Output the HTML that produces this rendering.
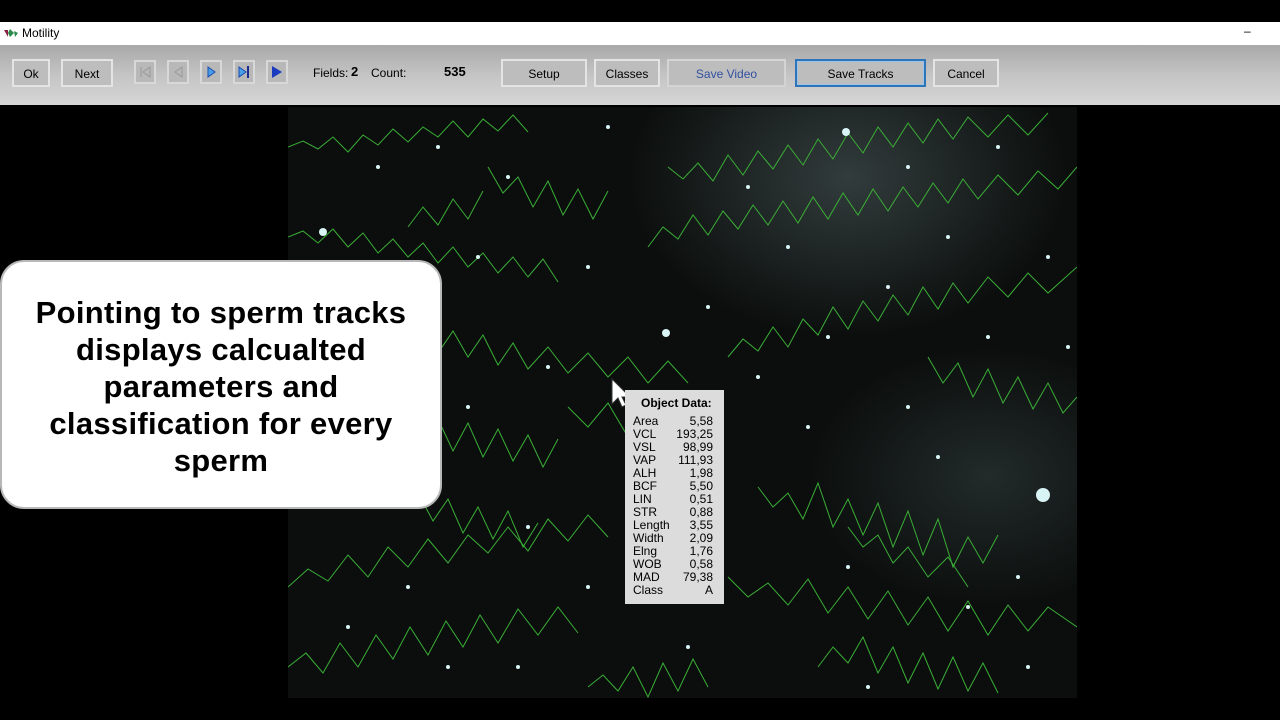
<!DOCTYPE html>
<html><head><meta charset="utf-8"><style>
*{margin:0;padding:0;box-sizing:border-box}
body{width:1280px;height:720px;background:#000;position:relative;overflow:hidden;font-family:"Liberation Sans",sans-serif}
.title{position:absolute;left:0;top:22px;width:1280px;height:23px;background:#fff;font-size:12px;color:#000}
.title span{position:absolute;left:22px;top:4px}
.tb{position:absolute;left:0;top:45px;width:1280px;height:60px;background:linear-gradient(#a9a9a9,#c4c4c4 50%,#d6d6d6)}
.b{position:absolute;top:59px;height:28px;border:2px solid #e4e4e4;background:#bdbdbd;font-size:12px;color:#000;text-align:center;line-height:26px}
.ic{position:absolute;top:60px;width:22px;height:24px;border:2px solid #d8d8d8;background:#b8b8b8}
.lbl{position:absolute;font-size:12px;color:#000}
.img{position:absolute;left:288px;top:107px;width:789px;height:591px;background:radial-gradient(ellipse 220px 160px at 560px 70px,#323c3c,transparent),radial-gradient(ellipse 180px 130px at 700px 370px,#222a2a,transparent),#0b0e0d}
.call{position:absolute;left:0;top:260px;width:442px;height:249px;background:#fff;border:2px solid #b8b8b8;border-radius:24px;font-weight:bold;font-size:31px;line-height:37px;text-align:center;padding-top:32px;letter-spacing:0.3px}
.od{position:absolute;left:625px;top:390px;width:99px;height:214px;background:#dcdcdc;font-size:12px;color:#000}
.od .h{font-weight:bold;position:absolute;left:16px;top:6px}
.od table{position:absolute;left:8px;top:25px;width:80px;border-collapse:collapse}
.od td{height:13px;line-height:13px;padding:0}
.od td+td{text-align:right}
</style></head><body>
<div class="title"><svg style="position:absolute;left:3px;top:5px" width="16" height="12"><path d="M1 3l4 0 0 7z" fill="#8b2040"/><path d="M7 2l4 4-4 4-2-4z" fill="#2a8a4a"/><path d="M11 4l4 2-3 4z" fill="#2a8a4a"/></svg><span>Motility</span><span style="left:1244px;top:2px">–</span></div>
<div class="tb"></div>
<div class="b" style="left:12px;width:38px">Ok</div>
<div class="b" style="left:61px;width:52px">Next</div>
<div class="ic" style="left:134px"><svg width="18" height="20"><path d="M5 5v10M14 5l-7 5 7 5z" stroke="#999" fill="none"/></svg></div>
<div class="ic" style="left:167px"><svg width="18" height="20"><path d="M13 5l-7 5 7 5z" stroke="#999" fill="none"/></svg></div>
<div class="ic" style="left:200px"><svg width="18" height="20"><path d="M6 5l7 5-7 5z" stroke="#1a4ab0" fill="#4aa0e8"/></svg></div>
<div class="ic" style="left:233px"><svg width="18" height="20"><path d="M4 5l7 5-7 5z" stroke="#1a4ab0" fill="#4aa0e8"/><path d="M13 4v12" stroke="#1a2a90" stroke-width="2"/></svg></div>
<div class="ic" style="left:266px"><svg width="18" height="20"><path d="M4 4l10 6-10 6z" fill="#1a3ac0"/></svg></div>
<div class="lbl" style="left:313px;top:66px">Fields:</div>
<div class="lbl" style="left:351px;top:64px;font-weight:bold;font-size:13px">2</div>
<div class="lbl" style="left:371px;top:66px">Count:</div>
<div class="lbl" style="left:444px;top:64px;font-weight:bold;font-size:13px">535</div>
<div class="b" style="left:501px;width:86px">Setup</div>
<div class="b" style="left:594px;width:66px">Classes</div>
<div class="b" style="left:667px;width:119px;color:#3050a0;border-color:#d4d4d4">Save Video</div>
<div class="b" style="left:795px;width:131px;border:2px solid #2d74b8;box-shadow:inset 0 0 0 1px #9cc4e8">Save Tracks</div>
<div class="b" style="left:933px;width:66px">Cancel</div>
<div class="img"><svg width="789" height="591" fill="none" stroke="#3aae36" stroke-width="1">
<polyline points="0,40 15,34 30,42 45,30 60,45 75,28 90,38 105,22 120,35 135,20 150,30 165,14 180,30 195,12 210,24 225,8 240,25"/>
<polyline points="0,130 15,124 30,136 45,122 60,140 75,126 90,146 105,132 120,150 135,136 150,156 165,140 180,160 195,146 210,166 225,150 240,170 255,152 270,175"/>
<polyline points="60,230 75,218 90,234 105,212 120,240 135,218 150,246 165,224 180,250 195,228 210,258 225,236 240,262 260,240 280,266 300,246 320,270 340,250 360,276 380,254 400,276"/>
<polyline points="360,140 375,120 390,132 405,108 420,128 435,104 450,122 465,98 480,118 495,94 510,116 525,90 540,112 555,86 570,108 585,82 600,104 615,80 630,100 645,76 660,96 675,72 690,92 710,68 730,88 750,64 770,82 789,60"/>
<polyline points="380,60 395,72 410,56 425,74 440,48 455,68 470,44 485,62 500,38 515,58 530,32 545,52 560,26 575,46 590,20 605,40 620,16 635,36 650,12 665,32 680,10 700,30 720,8 740,28 760,6"/>
<polyline points="440,250 455,232 470,244 485,220 500,240 515,212 530,228 545,200 560,222 575,194 590,214 605,188 620,208 635,180 650,202 665,176 680,196 700,170 720,190 740,166 760,186 789,160"/>
<polyline points="0,300 15,314 30,298 45,322 60,296 75,326 90,302 105,332 120,306 135,338 150,312 165,344 180,316 195,350 210,322 225,354 240,328 255,360 270,332"/>
<polyline points="0,480 20,462 40,474 60,448 80,470 100,440 120,460 140,432 160,456 180,428 200,446 220,420 240,444 260,412 280,434 300,408 320,430"/>
<polyline points="0,560 18,546 35,566 52,536 70,560 88,528 105,552 122,520 140,548 158,514 175,540 192,508 210,536 230,502 250,528 270,500 290,526"/>
<polyline points="440,470 460,490 480,476 500,498 520,472 540,506 560,480 580,512 600,484 620,518 640,490 660,524 680,494 700,528 720,498 740,524 760,500 789,520"/>
<polyline points="470,380 485,400 500,386 515,412 530,376 545,420 560,392 575,428 590,396 605,440 620,404 635,448 650,412 665,460 680,430 695,456 710,428"/>
<polyline points="530,560 545,540 560,556 575,530 590,566 605,540 620,576 635,546 650,582 665,550 680,584 695,556 710,586"/>
<polyline points="300,580 315,568 330,584 345,560 360,590 375,556 390,584 405,552 420,580"/>
<polyline points="640,250 655,276 670,256 685,290 700,262 715,296 730,270 745,302 760,276 775,306 789,290"/>
<polyline points="200,60 215,86 230,70 245,100 260,74 275,108 290,82 305,112 320,84"/>
<polyline points="100,380 115,398 130,386 145,414 160,392 175,426 190,400 205,432 220,404 235,440 250,416"/>
<polyline points="280,300 300,320 320,296 340,330 360,300 380,336 400,310"/>
<polyline points="120,120 135,100 150,118 165,92 180,112 195,84"/>
<polyline points="560,420 575,440 590,428 605,456 620,440 640,470 660,450 680,480"/>
<g fill="#d8f4f4" stroke="none">
<circle cx="35" cy="125" r="4"/><circle cx="378" cy="226" r="4"/><circle cx="558" cy="25" r="4"/><circle cx="755" cy="388" r="7"/>
<circle cx="150" cy="40" r="2"/><circle cx="220" cy="70" r="2"/><circle cx="300" cy="160" r="2"/><circle cx="420" cy="200" r="2"/><circle cx="500" cy="140" r="2"/><circle cx="600" cy="180" r="2"/><circle cx="700" cy="230" r="2"/><circle cx="100" cy="240" r="2"/><circle cx="180" cy="300" r="2"/><circle cx="520" cy="320" r="2"/><circle cx="650" cy="350" r="2"/><circle cx="240" cy="420" r="2"/><circle cx="120" cy="480" r="2"/><circle cx="560" cy="460" r="2"/><circle cx="680" cy="500" r="2"/><circle cx="400" cy="540" r="2"/><circle cx="60" cy="520" r="2"/><circle cx="740" cy="560" r="2"/><circle cx="760" cy="150" r="2"/><circle cx="30" cy="400" r="2"/><circle cx="320" cy="20" r="2"/><circle cx="460" cy="80" r="2"/><circle cx="620" cy="60" r="2"/><circle cx="230" cy="560" r="2"/><circle cx="580" cy="580" r="2"/><circle cx="710" cy="40" r="2"/>
<circle cx="190" cy="150" r="2"/><circle cx="260" cy="260" r="2"/><circle cx="350" cy="370" r="2"/><circle cx="470" cy="270" r="2"/><circle cx="540" cy="230" r="2"/><circle cx="620" cy="300" r="2"/><circle cx="730" cy="470" r="2"/><circle cx="300" cy="480" r="2"/><circle cx="160" cy="560" r="2"/><circle cx="660" cy="130" r="2"/><circle cx="90" cy="60" r="2"/><circle cx="780" cy="240" r="2"/>
</g></svg></div>
<svg style="position:absolute;left:611px;top:378px" width="24" height="34"><path d="M1 1v25l6-6 4 9 4-2-4-8h8z" fill="#fff" stroke="#333"/></svg>
<div class="od"><div class="h">Object Data:</div><table>
<tr><td>Area</td><td>5,58</td></tr><tr><td>VCL</td><td>193,25</td></tr><tr><td>VSL</td><td>98,99</td></tr><tr><td>VAP</td><td>111,93</td></tr><tr><td>ALH</td><td>1,98</td></tr><tr><td>BCF</td><td>5,50</td></tr><tr><td>LIN</td><td>0,51</td></tr><tr><td>STR</td><td>0,88</td></tr><tr><td>Length</td><td>3,55</td></tr><tr><td>Width</td><td>2,09</td></tr><tr><td>Elng</td><td>1,76</td></tr><tr><td>WOB</td><td>0,58</td></tr><tr><td>MAD</td><td>79,38</td></tr><tr><td>Class</td><td>A</td></tr></table></div>
<div class="call">Pointing to sperm tracks<br>displays calcualted<br>parameters and<br>classification for every<br>sperm</div>
</body></html>
